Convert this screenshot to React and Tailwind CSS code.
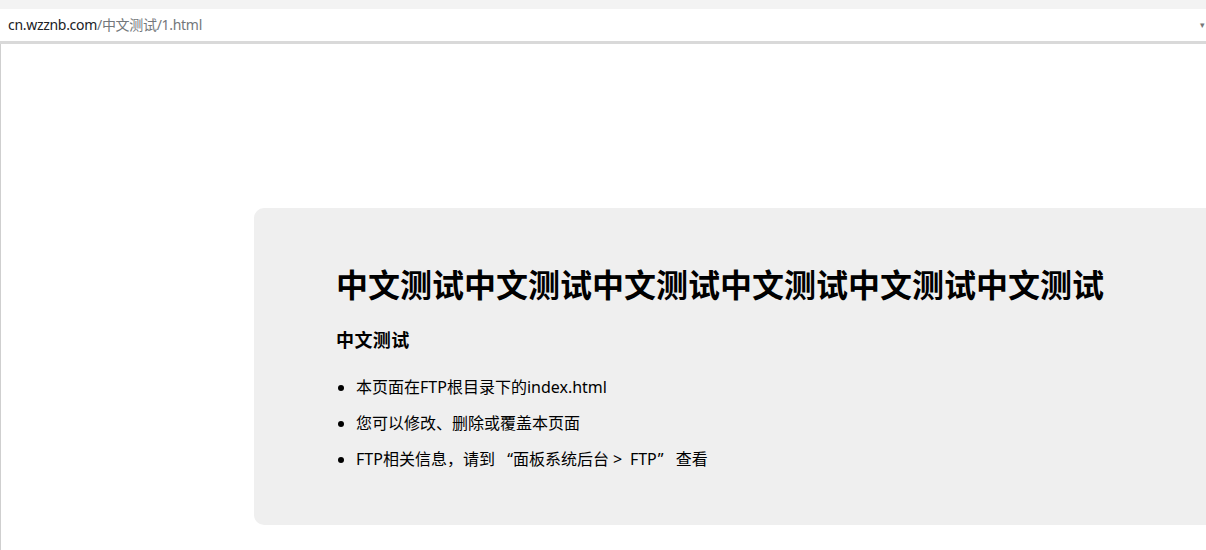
export default function App() {
  const font = { fontFamily: '"Noto Sans", "Noto Sans CJK SC", sans-serif' };
  return (
    <div className="w-[1206px] h-[550px] overflow-hidden bg-white text-black" style={font}>
      <div className="h-[9px] bg-[#f3f3f3]" />
      <div className="h-[35px] bg-white flex items-center justify-between pl-[8px] pr-[1px] border-b-[3px] border-[#d9d9d9]">
        <div className="text-[14px] leading-[20px] tracking-[-0.3px]">
          <span className="text-[#202124]">cn.wzznb.com</span>
          <span className="text-[#73777b]">/中文测试/1.html</span>
        </div>
        <span className="text-[9px] leading-[10px] text-[#777]">▾</span>
      </div>
      <div className="h-[506px] border-l border-[#cfcfcf] pt-[164px] pl-[253px]">
        <div className="w-[1000px] h-[317px] bg-[#efefef] rounded-[10px] pt-[57px] pl-[82px]">
          <h1 className="text-[32px] leading-[40px] font-bold">中文测试中文测试中文测试中文测试中文测试中文测试</h1>
          <h3 className="mt-[23px] text-[18px] leading-[24px] font-bold tracking-[0.4px]">中文测试</h3>
          <ul className="mt-[23px] list-disc pl-[20px] text-[16px] leading-[24px] flex flex-col gap-[12px]">
            <li>本页面在FTP根目录下的index.html</li>
            <li>您可以修改、删除或覆盖本页面</li>
            <li>
              FTP相关信息，请到
              <span className="inline-block w-[18px] text-right">“</span>
              面板系统后台
              <span className="inline-block w-[21px] pl-[4px]">&gt;</span>
              FTP
              <span className="inline-block w-[19px] pl-[1px]">”</span>
              查看
            </li>
          </ul>
        </div>
      </div>
    </div>
  );
}
